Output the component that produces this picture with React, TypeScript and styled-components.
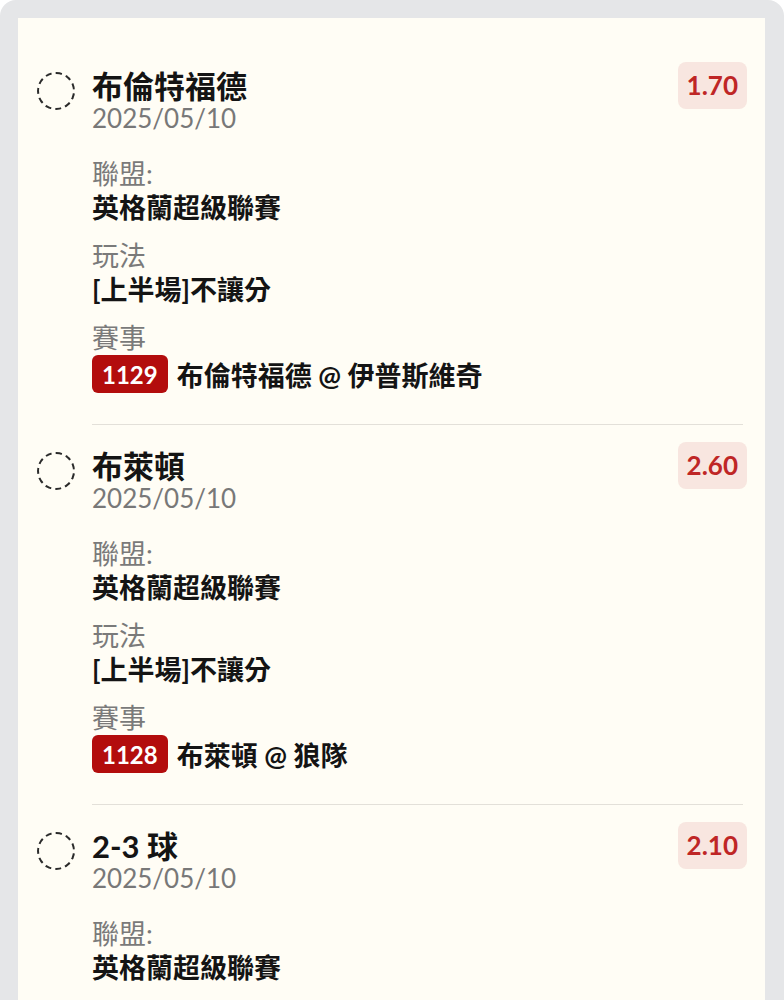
import styled, { createGlobalStyle } from 'styled-components';

const GlobalStyle = createGlobalStyle`
  html,
  body {
    margin: 0;
    padding: 0;
    background-color: #ffffff;
  }
  body {
    font-family: Lato, 'Noto Sans CJK TC', sans-serif;
    -webkit-font-smoothing: antialiased;
  }
`;

const FONT = `Lato, 'Noto Sans CJK TC', sans-serif`;

interface IBet {
  id: number;
  pick: string;
  date: string;
  league: string;
  market: string;
  matchNo: string;
  match: string;
  odds: string;
}

const bets: IBet[] = [
  {
    id: 1,
    pick: '布倫特福德',
    date: '2025/05/10',
    league: '英格蘭超級聯賽',
    market: '[上半場]不讓分',
    matchNo: '1129',
    match: '布倫特福德 @ 伊普斯維奇',
    odds: '1.70',
  },
  {
    id: 2,
    pick: '布萊頓',
    date: '2025/05/10',
    league: '英格蘭超級聯賽',
    market: '[上半場]不讓分',
    matchNo: '1128',
    match: '布萊頓 @ 狼隊',
    odds: '2.60',
  },
  {
    id: 3,
    pick: '2-3 球',
    date: '2025/05/10',
    league: '英格蘭超級聯賽',
    market: '[全場]總入球',
    matchNo: '1127',
    match: '布倫特福德 @ 伊普斯維奇',
    odds: '2.10',
  },
];

const Page = styled.div`
  height: 100vh;
  overflow: hidden;
  box-sizing: border-box;
  background-color: #e5e6e8;
  border-radius: 16px 16px 0 0;
  padding: 18px 19px 0 18px;
`;

const Card = styled.div`
  background-color: #fffdf5;
  padding: 27px 18px 0 19px;
  min-height: 100%;
`;

const Item = styled.div`
  padding-top: 17px;
`;

const Row = styled.div`
  display: flex;
  align-items: flex-start;
`;

const Selector = styled.div`
  flex: none;
  width: 38px;
  height: 38px;
  box-sizing: border-box;
  border: 2px dashed #2a2a2a;
  border-radius: 50%;
  margin-top: 10px;
  margin-right: 17px;
`;

const Content = styled.div`
  flex: 1;
  padding-top: 7px;
`;

const Title = styled.div`
  font-family: ${FONT};
  font-size: 31px;
  line-height: 34px;
  font-weight: 700;
  color: #141414;
`;

const DateText = styled.div`
  font-family: ${FONT};
  font-size: 26px;
  line-height: 28px;
  margin-top: 1px;
  color: #787878;
`;

const Fields = styled.div`
  display: flex;
  flex-direction: column;
  gap: 14px;
  margin-top: 25px;
`;

const Label = styled.div`
  font-family: ${FONT};
  font-size: 27px;
  line-height: 34px;
  color: #7a7a7a;
`;

const Value = styled.div`
  font-family: ${FONT};
  font-size: 27px;
  line-height: 34px;
  font-weight: 700;
  color: #141414;
`;

const MatchRow = styled.div`
  display: flex;
  align-items: center;
  gap: 9px;
  height: 38px;
`;

const MatchNo = styled.span`
  display: inline-flex;
  align-items: center;
  height: 38px;
  padding: 0 10px;
  border-radius: 6px;
  background-color: #b30d0d;
  color: #ffffff;
  font-family: ${FONT};
  font-size: 24px;
  font-weight: 700;
`;

const MatchName = styled.span`
  font-family: ${FONT};
  font-size: 27px;
  font-weight: 700;
  color: #141414;
`;

const Odds = styled.div`
  flex: none;
  height: 47px;
  line-height: 47px;
  padding: 0 9px;
  border-radius: 8px;
  background-color: #f8e6e0;
  color: #bf2626;
  font-family: ${FONT};
  font-size: 26px;
  font-weight: 700;
`;

const Divider = styled.div`
  height: 1px;
  background-color: #e3e0d9;
  margin: 31px 4px 0 55px;
`;

const BetItem = ({ bet }: { bet: IBet }) => (
  <Item>
    <Row>
      <Selector />
      <Content>
        <Title>{bet.pick}</Title>
        <DateText>{bet.date}</DateText>
        <Fields>
          <div>
            <Label>聯盟:</Label>
            <Value>{bet.league}</Value>
          </div>
          <div>
            <Label>玩法</Label>
            <Value>{bet.market}</Value>
          </div>
          <div>
            <Label>賽事</Label>
            <MatchRow>
              <MatchNo>{bet.matchNo}</MatchNo>
              <MatchName>{bet.match}</MatchName>
            </MatchRow>
          </div>
        </Fields>
      </Content>
      <Odds>{bet.odds}</Odds>
    </Row>
    <Divider />
  </Item>
);

export default function App() {
  return (
    <>
      <GlobalStyle />
      <Page>
        <Card>
          {bets.map(bet => (
            <BetItem key={bet.id} bet={bet} />
          ))}
        </Card>
      </Page>
    </>
  );
}
